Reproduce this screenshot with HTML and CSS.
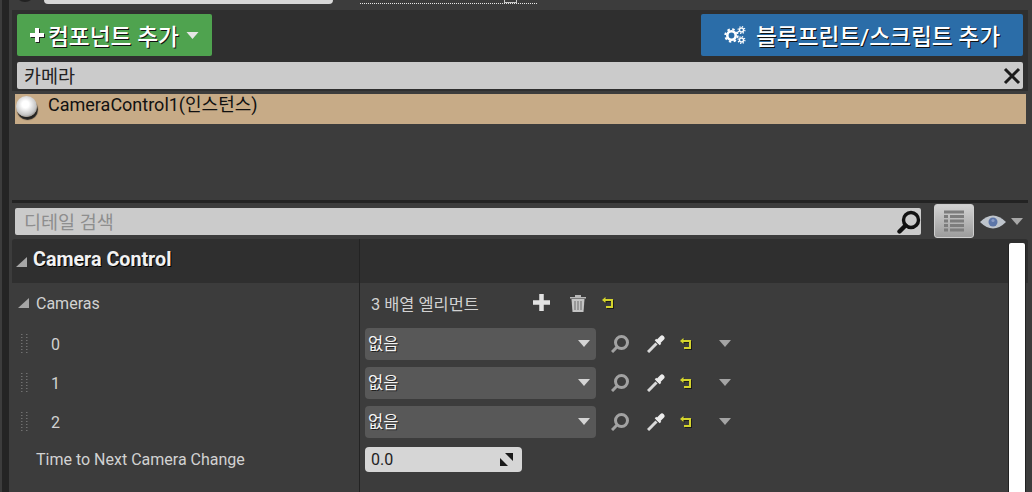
FILE: index.html
```html
<!DOCTYPE html>
<html lang="ko">
<head>
    <meta charset="UTF-8">
    <title>Camera Control</title>
    <link rel="stylesheet" href="styles.css">
</head>
<body>
    <svg class="sprite" width="0" height="0">
        <symbol id="i-caret" viewBox="0 0 12 7"><path d="M0 0h12L6 7z" fill="currentColor"/></symbol>
        <symbol id="i-reset" viewBox="0 0 12 12">
            <path d="M1 3h9v7H4" fill="none" stroke="#d4d42c" stroke-width="2"/>
            <path d="M0 3l3.500-3v6z" fill="#d4d42c"/>
        </symbol>
        <symbol id="i-lens" viewBox="0 0 18 18">
            <circle cx="10.500" cy="7.500" r="6" fill="none" stroke="currentColor" stroke-width="3"/>
            <path d="M6 12l-5 5" stroke="currentColor" stroke-width="3"/>
        </symbol>
        <symbol id="i-dropper" viewBox="0 0 18 18">
            <path d="M1 17L9.500 8.500" stroke="#d8d8d8" stroke-width="3"/>
            <path d="M12 6l3-3" stroke="#ececec" stroke-width="5" stroke-linecap="round"/>
            <path d="M8.500 4.500l5 5" stroke="#ececec" stroke-width="2.200"/>
        </symbol>
        <symbol id="i-grip" viewBox="0 0 7 19">
            <path d="M0 0.500h7M0 3.500h7M0 6.500h7M0 9.500h7M0 12.500h7M0 15.500h7M0 18.500h7" stroke="#707070" stroke-width="1" stroke-dasharray="1.500 3.500"/>
        </symbol>
    </svg>

    <div class="page">
        <div class="rail"><div class="rail-bar"></div></div>

        <div class="main">
            <div class="top-strip">
                <span class="top-circle"></span>
                <span class="top-input"></span>
                <span class="top-dotted"><span class="top-mark"></span></span>
            </div>

            <div class="toolbar">
                <div class="actions">
                    <button class="btn btn-green">
                        <svg class="plus-big" viewBox="0 0 16 16"><path d="M8 1v14M1 8h14" stroke="#fff" stroke-width="4"/></svg>
                        컴포넌트 추가
                        <svg class="btn-caret"><use href="#i-caret"/></svg>
                    </button>
                    <button class="btn btn-blue">
                        <svg class="gears" viewBox="0 0 23 18">
                            <circle cx="7.500" cy="9.500" r="4.200" fill="none" stroke="#fff" stroke-width="2.600"/>
                            <circle cx="7.500" cy="9.500" r="6.200" fill="none" stroke="#fff" stroke-width="2" stroke-dasharray="2.400 2.470"/>
                            <circle cx="17.500" cy="4" r="2" fill="none" stroke="#fff" stroke-width="1.400"/>
                            <circle cx="17.500" cy="4" r="3.400" fill="none" stroke="#fff" stroke-width="1.200" stroke-dasharray="1.300 1.370"/>
                            <circle cx="17.500" cy="14" r="2" fill="none" stroke="#fff" stroke-width="1.400"/>
                            <circle cx="17.500" cy="14" r="3.400" fill="none" stroke="#fff" stroke-width="1.200" stroke-dasharray="1.300 1.370"/>
                        </svg>
                        블루프린트/스크립트 추가
                    </button>
                </div>
                <div class="search search-filter">
                    <span class="search-text">카메라</span>
                    <svg class="clear-icon" viewBox="0 0 18 18"><path d="M2 2l14 14M16 2L2 16" stroke="#1c1c1c" stroke-width="3"/></svg>
                </div>
            </div>

            <div class="tree">
                <div class="tree-row">
                    <span class="sphere"></span>
                    <span class="tree-label">CameraControl1(인스턴스)</span>
                </div>
            </div>

            <div class="divider"></div>

            <div class="details-bar">
                <div class="search search-details">
                    <span class="search-text placeholder">디테일 검색</span>
                    <svg class="search-icon" viewBox="0 0 24 24">
                        <circle cx="14" cy="10" r="7.500" fill="none" stroke="#111" stroke-width="3.400"/>
                        <path d="M8.500 15.500l-6 6" stroke="#111" stroke-width="4.400" stroke-linecap="round"/>
                    </svg>
                </div>
                <div class="grid-btn">
                    <svg class="grid-icon" viewBox="0 0 20 22">
                        <path d="M0 2h20M0 6.500h4M6 6.500h14M0 11h4M6 11h14M0 15.500h4M6 15.500h14M0 20h4M6 20h14" stroke="#7d7d7d" stroke-width="3"/>
                    </svg>
                </div>
                <svg class="eye-icon" viewBox="0 0 26 16">
                    <path d="M0 8Q13-5 26 8 13 21 0 8z" fill="#bfc5cc"/>
                    <circle cx="13" cy="8" r="4.500" fill="#5d76a8"/>
                    <circle cx="13" cy="6.500" r="1.600" fill="#8a9cc4"/>
                </svg>
                <svg class="eye-caret"><use href="#i-caret"/></svg>
            </div>

            <div class="details">
                <div class="scrollbar"></div>

                <div class="row category">
                    <div class="name"><span class="corner corner-cat"></span>Camera Control</div>
                    <div class="value"></div>
                </div>

                <div class="row row-array">
                    <div class="name"><span class="corner corner-prop"></span>Cameras</div>
                    <div class="value">
                        <span class="array-count">3 배열 엘리먼트</span>
                        <svg class="icon-plus" viewBox="0 0 17 17"><path d="M8.500 0v17M0 8.500h17" stroke="#e2e2e2" stroke-width="4.500"/></svg>
                        <svg class="icon-trash" viewBox="0 0 16 18">
                            <path d="M0 3h16v1.500H0zM5 1h6v2H5z" fill="#b8b8b8"/>
                            <path d="M1.500 5h13l-1 13h-11z" fill="#c4c4c4"/>
                            <path d="M5 7v9M8 7v9M11 7v9" stroke="#6a6a6a" stroke-width="1"/>
                        </svg>
                        <svg class="icon-reset"><use href="#i-reset"/></svg>
                    </div>
                </div>

                <div class="row row-item">
                    <div class="name"><svg class="grip"><use href="#i-grip"/></svg><span class="index">0</span></div>
                    <div class="value">
                        <div class="combo"><span class="combo-text">없음</span><svg class="combo-caret"><use href="#i-caret"/></svg></div>
                        <svg class="icon-lens"><use href="#i-lens"/></svg>
                        <svg class="icon-dropper"><use href="#i-dropper"/></svg>
                        <svg class="icon-reset"><use href="#i-reset"/></svg>
                        <svg class="row-caret"><use href="#i-caret"/></svg>
                    </div>
                </div>

                <div class="row row-item">
                    <div class="name"><svg class="grip"><use href="#i-grip"/></svg><span class="index">1</span></div>
                    <div class="value">
                        <div class="combo"><span class="combo-text">없음</span><svg class="combo-caret"><use href="#i-caret"/></svg></div>
                        <svg class="icon-lens"><use href="#i-lens"/></svg>
                        <svg class="icon-dropper"><use href="#i-dropper"/></svg>
                        <svg class="icon-reset"><use href="#i-reset"/></svg>
                        <svg class="row-caret"><use href="#i-caret"/></svg>
                    </div>
                </div>

                <div class="row row-item">
                    <div class="name"><svg class="grip"><use href="#i-grip"/></svg><span class="index">2</span></div>
                    <div class="value">
                        <div class="combo"><span class="combo-text">없음</span><svg class="combo-caret"><use href="#i-caret"/></svg></div>
                        <svg class="icon-lens"><use href="#i-lens"/></svg>
                        <svg class="icon-dropper"><use href="#i-dropper"/></svg>
                        <svg class="icon-reset"><use href="#i-reset"/></svg>
                        <svg class="row-caret"><use href="#i-caret"/></svg>
                    </div>
                </div>

                <div class="row row-time">
                    <div class="name name-plain">Time to Next Camera Change</div>
                    <div class="value">
                        <div class="number">
                            <span>0.0</span>
                            <svg class="number-icon" viewBox="0 0 13 13">
                                <path d="M5 0h8v8zM0 5v8h8z" fill="#1a1a1a"/>
                            </svg>
                        </div>
                    </div>
                </div>

                <div class="row row-filler">
                    <div class="name"></div>
                    <div class="value"></div>
                </div>
            </div>
        </div>
    </div>
</body>
</html>
```

FILE: styles.css
```css
html, body {
    margin: 0;
    height: 100%;
    overflow: hidden;
}
body {
    background-color: #3c3c3c;
    font-family: Roboto, 'Noto Sans CJK KR', sans-serif;
    color: #d2d2d2;
    font-size: 16px;
}
svg {
    display: block;
    flex: none;
}
.sprite {
    position: absolute;
}
.page {
    display: flex;
    width: 1032px;
    height: 492px;
}
.rail {
    width: 12px;
    padding-left: 2px;
    box-sizing: border-box;
}
.rail-bar {
    width: 7px;
    height: 100%;
    background-color: #242424;
}
.main {
    width: 1016px;
    display: flex;
    flex-direction: column;
}

/* top strip, only the bottom of the window above is visible */
.top-strip {
    height: 10px;
    display: flex;
    overflow: hidden;
}
.top-circle {
    width: 20px;
    height: 20px;
    margin: -18px 0 0 3px;
    border-radius: 50%;
    background-color: #222;
}
.top-input {
    width: 289px;
    height: 4px;
    margin-left: 9px;
    background-color: #d8d8d8;
    border-radius: 0 0 4px 4px;
}
.top-dotted {
    position: relative;
    width: 177px;
    height: 0;
    margin: 3px 0 0 27px;
    border-top: 1px dotted #e8e8e8;
}
.top-mark {
    position: absolute;
    left: 144px;
    top: -4px;
    width: 11px;
    height: 2px;
    border: 1px solid #c8c8c8;
    border-top: none;
}

/* toolbar */
.toolbar {
    height: 81px;
    box-sizing: border-box;
    padding: 4px 5px 2px 5px;
    background-color: #2f2f2f;
}
.actions {
    display: flex;
    justify-content: space-between;
    height: 42px;
    margin-bottom: 6px;
}
.btn {
    display: flex;
    align-items: center;
    border: none;
    border-radius: 2px;
    color: #fff;
    font-family: inherit;
    font-size: 22.700px;
    font-weight: 500;
    text-shadow: 1px 1px 0 #111;
    padding: 0;
}
.btn-green {
    width: 195px;
    background-color: #4fa34f;
    padding-left: 12px;
}
.btn-blue {
    width: 322px;
    background-color: #2b6da8;
    padding-left: 23px;
}
.plus-big {
    width: 16px;
    height: 16px;
    margin-right: 3px;
    filter: drop-shadow(1px 1px 0 #222);
}
.btn-caret {
    width: 13px;
    height: 7px;
    margin-left: 7px;
    color: #e6e6e6;
}
.gears {
    width: 23px;
    height: 18px;
    margin-right: 9px;
}
.search {
    display: flex;
    align-items: center;
    justify-content: space-between;
    height: 27px;
    box-sizing: border-box;
    background-color: #cbcbcb;
    border-radius: 2px;
}
.search-text {
    color: #222;
    font-size: 18.500px;
    padding-bottom: 2px;
}
.search-filter {
    padding: 0 2px 0 7px;
}
.clear-icon {
    width: 18px;
    height: 18px;
}

/* component tree */
.tree {
    height: 109px;
    padding: 3px 2px 0 3px;
    box-sizing: border-box;
}
.tree-row {
    display: flex;
    height: 30px;
    background-color: #c7ab87;
    color: #111;
    font-size: 18px;
}
.sphere {
    width: 21px;
    height: 21px;
    margin: 2px 10px 0 1px;
    border-radius: 50%;
    background: radial-gradient(circle at 45% 40%, #fff 20%, #c4c4c4 62%, #6c6c6c 85%);
    box-shadow: 1px 3px 1px #222;
}
.tree-label {
    margin-left: 1px;
    line-height: 22px;
}
.divider {
    height: 3px;
    background-color: #232323;
}

/* details */
.details-bar {
    display: flex;
    align-items: center;
    height: 36px;
    padding-left: 3px;
}
.search-details {
    width: 906px;
    margin-top: 1px;
    padding: 0 0 0 9px;
}
.placeholder {
    color: #8e8e8e;
    padding-bottom: 1px;
}
.search-icon {
    width: 24px;
    height: 24px;
}
.grid-btn {
    display: flex;
    align-items: center;
    justify-content: center;
    width: 40px;
    height: 34px;
    margin-left: 13px;
    box-sizing: border-box;
    border: 1px solid #cfcfcf;
    border-radius: 3px;
    background: linear-gradient(#d4d4d4, #9c9c9c);
}
.grid-icon {
    width: 20px;
    height: 22px;
}
.eye-icon {
    width: 26px;
    height: 16px;
    margin: 2px 0 0 6px;
}
.eye-caret {
    width: 12px;
    height: 7px;
    margin: 0 0 0 5px;
    color: #a8a8a8;
}
.details {
    position: relative;
    flex: 1;
    display: flex;
    flex-direction: column;
    min-height: 0;
}
.scrollbar {
    position: absolute;
    top: 4px;
    bottom: 0;
    left: 997px;
    width: 16px;
    background-color: #fff;
    border-radius: 2px 2px 0 0;
    box-shadow: -1px 0 0 #222, 1px 0 0 #222;
}
.row {
    display: flex;
}
.name {
    display: flex;
    align-items: center;
    width: 348px;
    box-sizing: border-box;
    border-right: 1px solid #232323;
    flex: none;
}
.value {
    display: flex;
    align-items: center;
    flex: 1;
    padding-left: 5px;
}
.category {
    height: 44px;
    background-color: #2f2f2f;
    border-radius: 3px 3px 0 0;
}
.category .name {
    color: #f2f2f2;
    font-size: 19.700px;
    font-weight: 700;
    text-shadow: 1px 1px 0 #000;
    padding-bottom: 4px;
}
.corner {
    width: 0;
    height: 0;
    border-style: solid;
    border-color: transparent transparent #a6a6a6 transparent;
}
.corner-cat {
    border-width: 0 0 10px 11px;
    margin: 5px 6px 0 4px;
}
.corner-prop {
    border-width: 0 0 10px 11px;
    margin: 0 7px 2px 6px;
}
.row-array {
    height: 41px;
}
.row-array .value {
    padding-bottom: 2px;
}
.row-item {
    height: 39px;
}
.row-time {
    height: 37px;
}
.row-filler {
    flex: 1;
}
.name-plain {
    padding-left: 24px;
}
.array-count {
    width: 168px;
    padding-left: 6px;
    box-sizing: border-box;
    font-size: 16.400px;
}
.icon-plus {
    width: 17px;
    height: 17px;
}
.icon-trash {
    width: 16px;
    height: 18px;
    margin-left: 20px;
}
.icon-reset {
    width: 12px;
    height: 12px;
    filter: drop-shadow(1px 1px 0 #1c1c1c);
}
.row-array .icon-reset {
    margin-left: 16px;
}
.grip {
    width: 7px;
    height: 19px;
    margin-left: 9px;
}
.index {
    margin: 2px 0 0 23px;
}
.combo {
    display: flex;
    align-items: center;
    justify-content: space-between;
    width: 231px;
    height: 32px;
    box-sizing: border-box;
    padding: 0 6px 0 3px;
    background-color: #585858;
    border-radius: 4px;
    color: #f4f4f4;
    text-shadow: 1px 1px 0 #222;
}
.combo-text {
    font-size: 16.500px;
    padding-bottom: 2px;
}
.combo-caret {
    width: 12px;
    height: 7px;
    color: #d4d4d4;
}
.icon-lens {
    width: 18px;
    height: 18px;
    margin-left: 15px;
    color: #a2a2a2;
}
.icon-dropper {
    width: 18px;
    height: 18px;
    margin-left: 18px;
}
.row-item .icon-reset {
    margin-left: 15px;
}
.row-caret {
    width: 12px;
    height: 7px;
    margin-left: 27px;
    color: #a4a4a4;
}
.number {
    display: flex;
    align-items: center;
    justify-content: space-between;
    width: 157px;
    height: 25px;
    box-sizing: border-box;
    padding: 0 9px 0 6px;
    background-color: #d6d6d6;
    border-radius: 4px;
    color: #222;
}
.number-icon {
    width: 13px;
    height: 13px;
}
```
